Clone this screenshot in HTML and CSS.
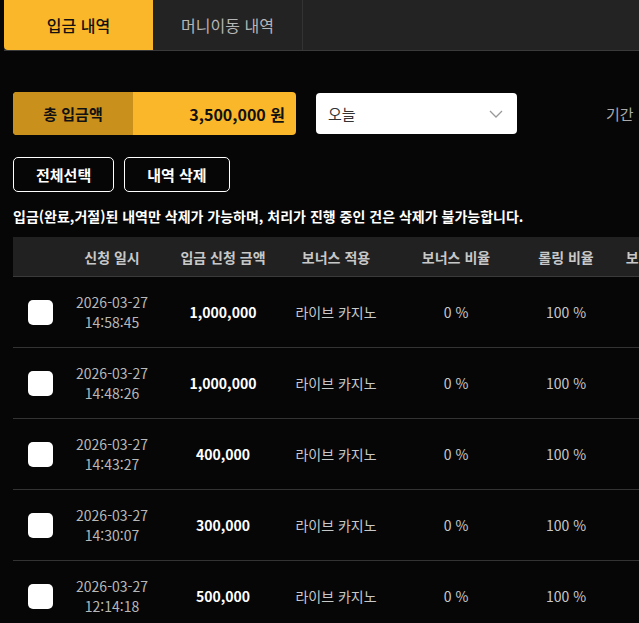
FILE: index.html
```html
<!DOCTYPE html>
<html lang="ko">
<head>
  <meta charset="UTF-8" />
  <meta name="viewport" content="width=device-width, initial-scale=1.0"/>
  <title>입금 내역</title>
  <link rel="stylesheet" href="styles.css">
</head>
<body>
  <!-- 탭 -->
  <div class="tabs">
    <div class="tab active">입금 내역</div>
    <div class="tab">머니이동 내역</div>
  </div>

  <div class="content">
    <!-- 합계 / 기간 선택 -->
    <div class="summary">
      <div class="total">
        <div class="total-label">총 입금액</div>
        <div class="total-value">3,500,000 원</div>
      </div>
      <div class="select">
        <span>오늘</span>
        <svg width="14" height="8" viewBox="0 0 14 8"><path d="M1 1l6 6 6-6" fill="none" stroke="#999" stroke-width="1.3"/></svg>
      </div>
      <div class="period">기간</div>
    </div>

    <!-- 버튼 -->
    <div class="actions">
      <button class="btn">전체선택</button>
      <button class="btn">내역 삭제</button>
    </div>

    <p class="notice">입금(완료,거절)된 내역만 삭제가 가능하며, 처리가 진행 중인 건은 삭제가 불가능합니다.</p>

    <!-- 목록 -->
    <table class="list">
      <colgroup>
        <col style="width:54px">
        <col style="width:90px">
        <col style="width:132px">
        <col style="width:94px">
        <col style="width:146px">
        <col style="width:74px">
        <col style="width:114px">
      </colgroup>
      <thead>
        <tr>
          <th></th>
          <th>신청 일시</th>
          <th>입금 신청 금액</th>
          <th>보너스 적용</th>
          <th>보너스 비율</th>
          <th>롤링 비율</th>
          <th>보너스 금액</th>
        </tr>
      </thead>
      <tbody>
        <tr>
          <td><span class="check"></span></td>
          <td class="date">2026-03-27<br>14:58:45</td>
          <td class="amount">1,000,000</td>
          <td>라이브 카지노</td>
          <td>0 %</td>
          <td>100 %</td>
          <td>0</td>
        </tr>
        <tr>
          <td><span class="check"></span></td>
          <td class="date">2026-03-27<br>14:48:26</td>
          <td class="amount">1,000,000</td>
          <td>라이브 카지노</td>
          <td>0 %</td>
          <td>100 %</td>
          <td>0</td>
        </tr>
        <tr>
          <td><span class="check"></span></td>
          <td class="date">2026-03-27<br>14:43:27</td>
          <td class="amount">400,000</td>
          <td>라이브 카지노</td>
          <td>0 %</td>
          <td>100 %</td>
          <td>0</td>
        </tr>
        <tr>
          <td><span class="check"></span></td>
          <td class="date">2026-03-27<br>14:30:07</td>
          <td class="amount">300,000</td>
          <td>라이브 카지노</td>
          <td>0 %</td>
          <td>100 %</td>
          <td>0</td>
        </tr>
        <tr>
          <td><span class="check"></span></td>
          <td class="date">2026-03-27<br>12:14:18</td>
          <td class="amount">500,000</td>
          <td>라이브 카지노</td>
          <td>0 %</td>
          <td>100 %</td>
          <td>0</td>
        </tr>
      </tbody>
    </table>
  </div>
</body>
</html>
```

FILE: styles.css
```css
body {
  margin: 0;
  background-color: #060606;
  color: #fff;
  font-family: "Noto Sans CJK KR", "Noto Sans", sans-serif;
  overflow: hidden;
}

/* 탭 */
.tabs {
  display: flex;
  margin-left: 4px;
  height: 50px;
  background-color: #232323;
  border-bottom: 1px solid #3a3a3a;
}

.tab {
  width: 149px;
  display: flex;
  align-items: center;
  justify-content: center;
  font-size: 16px;
  color: #b5b5b5;
  border-right: 1px solid #333;
}

.tab.active {
  background-color: #fbb72a;
  color: #111;
  font-weight: 500;
  border-right: none;
  border-bottom-left-radius: 4px;
}

.content {
  padding: 41px 0 0 13px;
}

/* 합계 */
.summary {
  display: flex;
  align-items: center;
}

.total {
  display: flex;
  width: 283px;
  height: 43px;
  border-radius: 4px;
  overflow: hidden;
  background-color: #fbb72a;
  color: #111;
  font-weight: bold;
}

.total-label {
  width: 120px;
  background-color: #c9901c;
  display: flex;
  align-items: center;
  justify-content: center;
  font-size: 15px;
}

.total-value {
  flex: 1;
  display: flex;
  align-items: center;
  justify-content: flex-end;
  padding-right: 11px;
  font-size: 16px;
}

.select {
  margin-left: 20px;
  width: 201px;
  height: 41px;
  box-sizing: border-box;
  background-color: #fff;
  border-radius: 4px;
  display: flex;
  align-items: center;
  justify-content: space-between;
  padding: 0 14px 0 12px;
  color: #333;
  font-size: 15px;
}

.period {
  margin-left: 89px;
  color: #aaa;
  font-size: 15px;
  white-space: nowrap;
}

/* 버튼 */
.actions {
  display: flex;
  gap: 10px;
  margin-top: 22px;
}

.btn {
  height: 35px;
  padding: 0 22px;
  background: transparent;
  border: 1px solid #fff;
  border-radius: 5px;
  color: #fff;
  font-family: inherit;
  font-size: 15px;
  font-weight: bold;
}

.notice {
  margin: 14px 0 0;
  font-size: 14px;
  font-weight: bold;
  white-space: nowrap;
}

/* 목록 */
.list {
  margin-top: 11px;
  border-collapse: collapse;
  table-layout: fixed;
  width: 704px;
}

.list th {
  height: 39px;
  background-color: #212121;
  color: #c8c8c8;
  font-size: 14px;
  font-weight: bold;
  border-bottom: 1px solid #3a3a3a;
  white-space: nowrap;
  padding: 0;
}

.list td {
  height: 70px;
  text-align: center;
  font-size: 14px;
  color: #c8c8c8;
  border-bottom: 1px solid #333;
  padding: 0;
  white-space: nowrap;
}

.list td.date {
  line-height: 20px;
  color: #b8b8b8;
}

.list td.amount {
  color: #fff;
  font-weight: bold;
}

.check {
  display: inline-block;
  width: 25px;
  height: 25px;
  background-color: #fff;
  border-radius: 5px;
  vertical-align: middle;
}
```
